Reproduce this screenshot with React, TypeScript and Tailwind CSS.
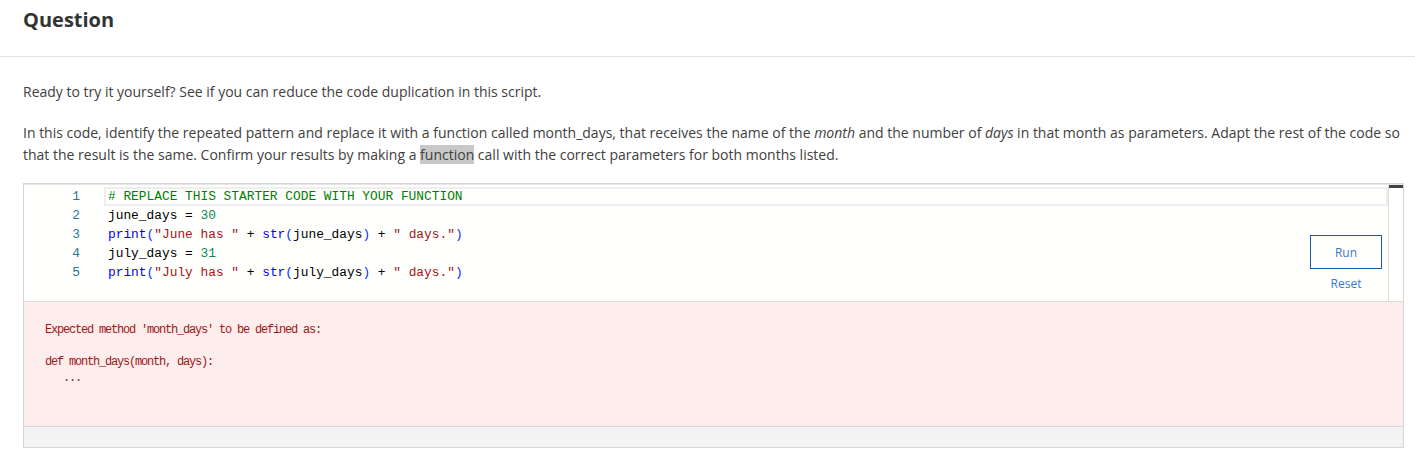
import React from "react";

type Tok = { t: string; c?: string };

const KW = "text-[#0000ff]";
const STR = "text-[#a31515]";
const NUM = "text-[#098658]";
const CMT = "text-[#008000]";
const PAR = "text-[#0431fa]";

const lines: Tok[][] = [
  [{ t: "# REPLACE THIS STARTER CODE WITH YOUR FUNCTION", c: CMT }],
  [{ t: "june_days = " }, { t: "30", c: NUM }],
  [
    { t: "print", c: KW },
    { t: "(", c: PAR },
    { t: '"June has "', c: STR },
    { t: " + " },
    { t: "str", c: KW },
    { t: "(", c: PAR },
    { t: "june_days" },
    { t: ")", c: PAR },
    { t: " + " },
    { t: '" days."', c: STR },
    { t: ")", c: PAR },
  ],
  [{ t: "july_days = " }, { t: "31", c: NUM }],
  [
    { t: "print", c: KW },
    { t: "(", c: PAR },
    { t: '"July has "', c: STR },
    { t: " + " },
    { t: "str", c: KW },
    { t: "(", c: PAR },
    { t: "july_days" },
    { t: ")", c: PAR },
    { t: " + " },
    { t: '" days."', c: STR },
    { t: ")", c: PAR },
  ],
];

function CodeEditor() {
  return (
    <div className="relative flex h-[116px] bg-[#fffffe] font-['Liberation_Mono',monospace] text-[12.85px] leading-[19px]">
      <div className="w-[80px] shrink-0 pt-[2px] pr-[24px] text-right text-[#237893]">
        {lines.map((_, i) => (
          <div key={i}>{i + 1}</div>
        ))}
      </div>
      <div className="flex-1 pt-[2px] whitespace-pre text-black">
        {lines.map((line, i) => (
          <div
            key={i}
            className={
              i === 0
                ? "h-[19px] border-2 border-[#eeeeee] pl-[2px] leading-[15px]"
                : "h-[19px] pl-[4px]"
            }
          >
            {line.map((tok, j) => (
              <span key={j} className={tok.c}>
                {tok.t}
              </span>
            ))}
          </div>
        ))}
      </div>
      <div className="w-[15px] shrink-0 border-l border-[#dddddd]">
        <div className="h-[3px] bg-[#424242]" />
      </div>
      <div className="absolute right-[21px] top-[50px] flex flex-col items-center font-['Open_Sans',sans-serif] text-[12px]">
        <button className="h-[34px] w-[72px] border border-[#1a5ba8] text-[#3b78c4]">
          Run
        </button>
        <span className="mt-[5px] text-[#3b78c4]">Reset</span>
      </div>
    </div>
  );
}

export default function App() {
  return (
    <div className="min-h-[468px] bg-white font-['Open_Sans',sans-serif] text-[#404040]">
      <div className="h-[57px] border-b border-[#e1e1e1] px-[23px] pt-[6px]">
        <h1 className="text-[20px] font-bold leading-[28px] text-[#333333]">
          Question
        </h1>
      </div>
      <div className="pl-[23px] pr-[11px] pt-[24px] text-[14px] leading-[22px]">
        <p>
          Ready to try it yourself? See if you can reduce the code duplication
          in this script.
        </p>
        <p className="mt-[19px]">
          In this code, identify the repeated pattern and replace it with a
          function called month_days, that receives the name of the{" "}
          <em>month</em> and the number of <em>days</em> in that month as
          parameters. Adapt the rest of the code so that the result is the
          same. Confirm your results by making a{" "}
          <span className="bg-[#c8c8c8]">function</span> call with the correct
          parameters for both months listed.
        </p>
        <div className="mt-[17px] border border-[#d6d6d6]">
          <div className="border-t border-[#e6e6e6]">
            <CodeEditor />
          </div>
          <div className="h-[125px] border-t border-[#dddddd] bg-[#fdeded] px-[21px] pt-[20px]">
            <pre className="font-['Liberation_Mono',monospace] text-[12px] leading-[16px] tracking-[-1.2px] text-[#a31515]">
              {"Expected method 'month_days' to be defined as:\n\ndef month_days(month, days):\n   ..."}
            </pre>
          </div>
          <div className="h-[21px] border-t border-[#d6d6d6] bg-[#f3f3f3]" />
        </div>
      </div>
    </div>
  );
}
